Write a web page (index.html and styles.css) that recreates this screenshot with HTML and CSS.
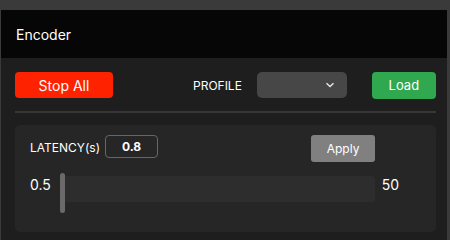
FILE: index.html
```html
<!DOCTYPE html>
<html lang="en">
<head>
    <meta charset="UTF-8">
    <title>Encoder</title>
    <link rel="stylesheet" href="styles.css">
</head>
<body>
    <div class="panel">
        <div class="panel-header">Encoder</div>
        <div class="panel-body">
            <div class="toolbar">
                <button class="btn btn-stop">Stop All</button>
                <div class="profile">
                    <span class="label">PROFILE</span>
                    <div class="select">
                        <svg width="10" height="6" viewBox="0 0 10 6"><path d="M1.5 1.2 L5 4.6 L8.5 1.2" fill="none" stroke="#e6e6e6" stroke-width="1.4"/></svg>
                    </div>
                </div>
                <button class="btn btn-load">Load</button>
            </div>
            <div class="divider"></div>
            <div class="card">
                <div class="card-row">
                    <span class="label">LATENCY(s)</span>
                    <div class="value-box">0.8</div>
                    <button class="btn btn-apply">Apply</button>
                </div>
                <div class="slider-row">
                    <span class="range-label">0.5</span>
                    <div class="slider">
                        <div class="thumb"></div>
                        <div class="track"></div>
                    </div>
                    <span class="range-label">50</span>
                </div>
            </div>
        </div>
    </div>
</body>
</html>
```

FILE: styles.css
```css
body {
    margin: 0;
    background: #3a3a3a;
    font-family: Inter, "Liberation Sans", sans-serif;
    color: white;
    height: 240px;
    overflow: hidden;
}

.panel {
    margin: 10px 3px 0 1px;
    background: #1e1e1e;
    height: 230px;
}

.panel-header {
    background: #060606;
    height: 48px;
    display: flex;
    align-items: center;
    padding-left: 15px;
    font-size: 14px;
}

.panel-body {
    padding: 14px 10px 0 14px;
}

.toolbar {
    display: flex;
    align-items: center;
    height: 26px;
}

.btn {
    border: none;
    color: white;
    font-family: inherit;
    cursor: pointer;
    padding: 0;
}

.btn-stop {
    background: #ff2200;
    width: 98px;
    height: 26px;
    border-radius: 4px;
    font-size: 14px;
}

.profile {
    display: flex;
    align-items: center;
    margin-left: 80px;
}

.label {
    font-size: 12px;
}

.select {
    margin-left: 15px;
    width: 90px;
    height: 26px;
    background: #474747;
    border-radius: 5px;
    display: flex;
    align-items: center;
    justify-content: flex-end;
    padding-right: 12px;
    box-sizing: border-box;
}

.btn-load {
    margin-left: 25px;
    background: #2fa84f;
    width: 64px;
    height: 27px;
    border-radius: 4px;
    font-size: 13px;
}

.divider {
    height: 2px;
    background: #373737;
    margin-top: 13px;
    width: 421px;
}

.card {
    margin-top: 12px;
    width: 421px;
    height: 107px;
    background: #262626;
    border-radius: 5px;
    padding: 10px 15px 0 15px;
    box-sizing: border-box;
}

.card-row {
    display: flex;
    align-items: flex-start;
}

.card-row .label {
    margin-top: 5px;
}

.value-box {
    margin-left: 5px;
    width: 53px;
    height: 23px;
    border: 1px solid #666;
    border-radius: 4px;
    box-sizing: border-box;
    display: flex;
    align-items: center;
    justify-content: center;
    font-size: 12px;
    font-weight: bold;
}

.btn-apply {
    margin-left: 153px;
    width: 64px;
    height: 27px;
    background: #808080;
    border-radius: 3px;
    font-size: 12px;
}

.slider-row {
    display: flex;
    align-items: flex-start;
    margin-top: 11px;
}

.range-label {
    font-size: 14px;
    margin-top: 3px;
}

.slider {
    display: flex;
    align-items: flex-start;
    margin-left: 9px;
}

.thumb {
    width: 5px;
    height: 40px;
    background: #6a6a6a;
    border-radius: 3px;
}

.track {
    width: 310px;
    height: 26px;
    margin-top: 3px;
    background: #2d2d2d;
    border-radius: 0 3px 3px 0;
}

.slider + .range-label {
    margin-left: 7px;
}
```
